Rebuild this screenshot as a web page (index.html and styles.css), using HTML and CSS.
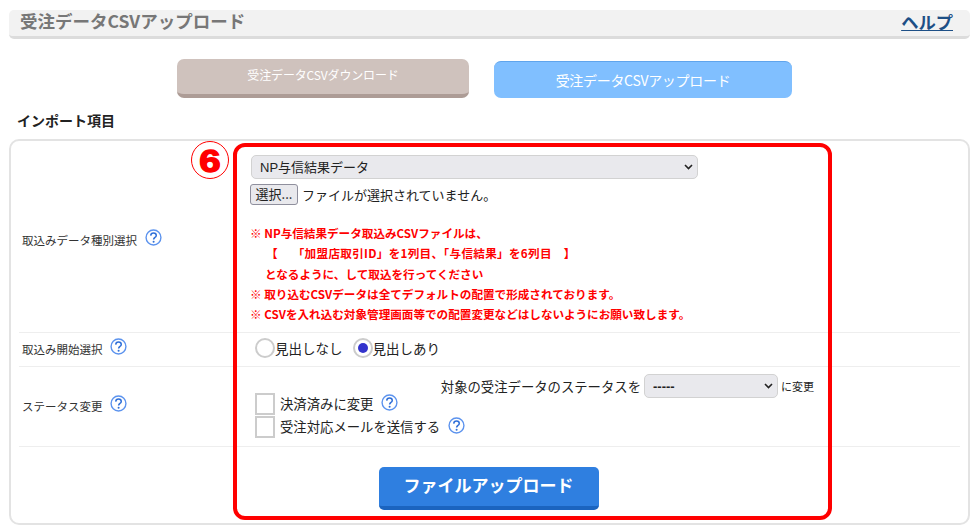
FILE: index.html
```html
<!DOCTYPE html>
<html lang="ja">
<head>
<meta charset="utf-8">
<title>受注データCSVアップロード</title>
<link rel="stylesheet" href="styles.css">
</head>
<body>
<div class="page">
  <header class="title-bar">
    <h1 class="title">受注データCSVアップロード</h1>
    <a class="help-link" href="#">ヘルプ</a>
  </header>
  <nav class="tabs">
    <button class="tab tab-download" type="button">受注データCSVダウンロード</button>
    <button class="tab tab-upload" type="button">受注データCSVアップロード</button>
  </nav>
  <h2 class="section-title">インポート項目</h2>
  <section class="panel">
    <div class="row row-type">
      <div class="label"><span>取込みデータ種別選択</span><svg class="help help-a" viewBox="0 0 16 16"><use href="#q"/></svg></div>
      <div class="field">
        <select class="select select-type"><option>NP与信結果データ</option></select>
        <div class="file-line"><span class="file-btn">選択...</span><span>ファイルが選択されていません。</span></div>
        <div class="notes">
          <p>※ NP与信結果データ取込みCSVファイルは、</p>
          <p class="ind1">【　 「加盟店取引ID」を1列目、「与信結果」を6列目　】</p>
          <p class="ind2">となるように、して取込を行ってください</p>
          <p>※ 取り込むCSVデータは全てデフォルトの配置で形成されております。</p>
          <p>※ CSVを入れ込む対象管理画面等での配置変更などはしないようにお願い致します。</p>
        </div>
      </div>
    </div>
    <div class="row row-start">
      <div class="label"><span>取込み開始選択</span><svg class="help help-b" viewBox="0 0 16 16"><use href="#q"/></svg></div>
      <div class="field radios">
        <span class="radio"></span><span class="radio-text">見出しなし</span>
        <span class="radio radio-on"></span><span>見出しあり</span>
      </div>
    </div>
    <div class="row row-status">
      <div class="label"><span>ステータス変更</span><svg class="help help-b" viewBox="0 0 16 16"><use href="#q"/></svg></div>
      <div class="field status">
        <div class="status-target"><span>対象の受注データのステータスを</span><select class="select select-status"><option>-----</option></select><span class="small">に変更</span></div>
        <div class="check check-first"><span class="box"></span><span>決済済みに変更</span><svg class="help" viewBox="0 0 16 16"><use href="#q"/></svg></div>
        <div class="check"><span class="box"></span><span>受注対応メールを送信する</span><svg class="help" viewBox="0 0 16 16"><use href="#q"/></svg></div>
      </div>
    </div>
    <div class="row-submit">
      <button class="submit" type="button">ファイルアップロード</button>
    </div>
  </section>
  <div class="callout"></div>
  <div class="callout-num"><span class="callout-digit">6</span></div>
</div>
<svg class="defs" width="0" height="0">
  <symbol id="q" viewBox="0 0 16 16">
    <circle cx="8" cy="8" r="7" fill="#fff" stroke="#5c93ee" stroke-width="1.3"/>
    <path d="M5.4 6.2C5.5 4.6 6.6 3.8 8 3.8c1.5 0 2.6.9 2.6 2.2 0 1-.6 1.5-1.3 2-.8.5-1.2.9-1.2 1.9" fill="none" stroke="#2f6fd8" stroke-width="1.4"/>
    <circle cx="8.1" cy="11.9" r=".95" fill="#2f6fd8"/>
  </symbol>
</svg>
</body>
</html>
```
FILE: styles.css
```css
* { box-sizing: border-box; }
html, body { margin: 0; padding: 0; background: #fff; }
body { font-family: "Noto Sans CJK JP", "Liberation Sans", sans-serif; color: #222; width: 980px; height: 530px; overflow: hidden; }
.page { position: relative; padding: 10px 10px 0 9px; height: 530px; }
.defs { position: absolute; }
p, h1, h2 { margin: 0; }

.title-bar { display: flex; justify-content: space-between; align-items: center; height: 29px; background: #f2f2f2; border-bottom: 3px solid #dcdcdc; border-radius: 5px; padding: 0 17px 3px 11px; }
.title { font-size: 17.5px; font-weight: 700; color: #777; line-height: 20px; margin-top: -1px; }
.help-link { font-size: 17.3px; font-weight: 700; color: #1d4f86; line-height: 19px; text-decoration: underline; }

.tabs { display: flex; align-items: flex-end; margin: 20px 0 0 168px; gap: 25px; height: 39px; }
.tab { border: 0; color: #fff; font-family: inherit; padding: 0; }
.tab-download { width: 292px; height: 39px; background: #cfc2bd; border-bottom: 4px solid #ad9c96; border-radius: 7px; font-size: 12px; padding-bottom: 4px; letter-spacing: -.15px; }
.tab-upload { width: 298px; height: 37px; background: #80bfff; border-top: 1px solid #5fa4ec; border-radius: 7px; font-size: 14px; letter-spacing: -.3px; }

.section-title { margin: 12px 0 0 8px; font-size: 14px; font-weight: 700; color: #222; line-height: 20px; }

.panel { margin-top: 9px; height: 386px; border: 2px solid #e3e3e3; border-radius: 10px; padding: 0 8px; background: #fff; }
.row { display: grid; grid-template-columns: 232px 1fr; border-bottom: 1px solid #eee; align-items: center; }
.label { display: flex; align-items: center; gap: 7px; font-size: 11.5px; color: #333; padding: 0 0 2px 3px; }
.help { width: 17px; height: 17px; flex: none; }
.help-a { margin-left: 1px; margin-top: -5px; }
.help-b { margin-top: -4px; }
.field { font-size: 13px; }

.row-type { height: 192px; }
.row-type .label { padding-top: 6px; padding-bottom: 0; }
.row-type .field { align-self: start; padding-top: 14px; }
.select { display: block; appearance: none; font-family: "Liberation Sans", "Noto Sans CJK JP", sans-serif; font-size: 13px; background-color: #e9e9ed; background-image: url("data:image/svg+xml,%3Csvg xmlns='http://www.w3.org/2000/svg' width='9' height='6'%3E%3Cpath d='M1 1l3.500 3.500L8 1' fill='none' stroke='%23222' stroke-width='1.600'/%3E%3C/svg%3E"); background-repeat: no-repeat; background-position: right 4px center; border: 1px solid #d2d2d2; border-radius: 5px; color: #222; }
.select-type { width: 447px; height: 24px; padding-left: 8px; }
.file-line { display: flex; align-items: center; gap: 4px; margin: 5px 0 0 -1px; font-size: 13px; line-height: 20px; }
.file-btn { display: block; width: 48px; height: 21px; line-height: 18px; background: #e9e9ed; border: 1px solid #8f8f9d; border-radius: 3px; text-align: center; font-size: 13px; }
.notes { margin: 18px 0 0 -1px; color: #f00; font-size: 11.6px; font-weight: 700; line-height: 20.25px; }
.ind1 { padding-left: 16px; letter-spacing: .3px; }
.ind2 { padding-left: 15px; }

.row-start { height: 34px; }
.radios { display: flex; align-items: center; padding: 0 0 4px 4px; font-size: 13.5px; }
.radio { width: 20px; height: 20px; border: 2px solid #ccc; border-radius: 50%; background: #fff; flex: none; position: relative; }
.radio-text { margin-right: 10px; }
.radio-on::after { content: ""; position: absolute; left: 3px; top: 3px; width: 10px; height: 10px; border-radius: 50%; background: #3333cc; }

.row-status { height: 80px; }
.row-status .field { align-self: start; padding: 7px 0 0 4px; font-size: 13.35px; }
.status-target { display: flex; align-items: center; justify-content: flex-end; gap: 3px; height: 24px; margin-right: 146px; }
.select-status { width: 134px; height: 24px; padding-left: 8px; font-weight: 700; }
.small { font-size: 11px; }
.check { display: flex; align-items: center; height: 23px; }
.check-first { margin-top: -6px; }
.box { width: 20px; height: 22px; border: 2px solid #ccc; background: #fff; margin-right: 5px; flex: none; }
.check .help { margin-left: 8px; margin-top: -3px; }

.row-submit { display: flex; justify-content: center; padding: 20px 0 0 0; }
.submit { width: 220px; height: 43px; margin-left: -2px; border: 0; border-bottom: 4px solid #1b64bf; border-radius: 5px; background: #2f7fe0; color: #fff; font-family: inherit; font-size: 17px; font-weight: 700; padding: 0 0 4px; }

.callout { position: absolute; left: 233px; top: 143px; width: 599px; height: 377px; border: 4px solid #f00; border-radius: 12px; }
.callout-num { position: absolute; left: 191px; top: 141px; width: 38px; height: 38px; border: 1.5px solid #f00; border-radius: 50%; color: #f00; background: #fff; font-family: "Liberation Sans", sans-serif; font-size: 32px; font-weight: 700; line-height: 38px; text-align: center; -webkit-text-stroke: 1.4px #f00; }
.callout-digit { display: inline-block; transform: scaleX(1.2); }
```
